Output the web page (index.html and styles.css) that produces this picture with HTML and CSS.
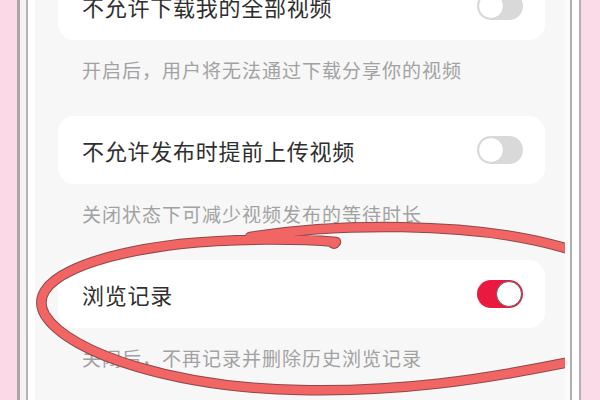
FILE: index.html
```html
<!DOCTYPE html>
<html lang="zh">
<head>
<meta charset="utf-8">
<link rel="stylesheet" href="styles.css">
</head>
<body>
<div class="page">
  <div class="pink-l"></div>
  <div class="line-a"></div>
  <div class="gap-a"></div>
  <div class="line-b"></div>
  <div class="white-a"></div>
  <div class="screen">
    <div class="list">
      <div class="card">
        <span class="title">不允许下载我的全部视频</span>
        <span class="toggle"><span class="knob"></span></span>
      </div>
      <div class="desc">开启后，用户将无法通过下载分享你的视频</div>
      <div class="card">
        <span class="title">不允许发布时提前上传视频</span>
        <span class="toggle"><span class="knob"></span></span>
      </div>
      <div class="desc">关闭状态下可减少视频发布的等待时长</div>
      <div class="card">
        <span class="title">浏览记录</span>
        <span class="toggle on"><span class="knob"></span></span>
      </div>
      <div class="desc">关闭后，不再记录并删除历史浏览记录</div>
    </div>
  </div>
  <div class="white-b"></div>
  <div class="line-c"></div>
  <div class="gap-b"></div>
  <div class="line-d"></div>
  <div class="pink-r"></div>
  <svg class="mark" width="600" height="400" viewBox="0 0 600 400">
    <defs>
      <clipPath id="scr"><rect x="35" y="0" width="530" height="400"/></clipPath>
    </defs>
    <g clip-path="url(#scr)" fill="none" stroke-linecap="round" stroke-linejoin="round">
      <path class="ring-edge" d="M 250 237 C 330 224, 470 220, 565 248 C 640 270, 650 350, 565 363 C 480 380, 400 392, 300 390 C 180 388, 70 355, 45 315 C 25 280, 90 255, 180 244 C 240 238, 300 239, 336 242"/>
      <circle class="blob-edge" cx="334" cy="243" r="6"/>
      <path class="ring" d="M 250 237 C 330 224, 470 220, 565 248 C 640 270, 650 350, 565 363 C 480 380, 400 392, 300 390 C 180 388, 70 355, 45 315 C 25 280, 90 255, 180 244 C 240 238, 300 239, 336 242"/>
      <circle class="blob" cx="334" cy="243" r="5"/>
    </g>
  </svg>
</div>
</body>
</html>
```

FILE: styles.css
```css
html, body {
  margin: 0;
  padding: 0;
}
body {
  width: 600px;
  height: 400px;
  overflow: hidden;
  font-family: "Noto Sans CJK SC", "Noto Sans", sans-serif;
}
.page {
  position: relative;
  display: flex;
  width: 600px;
  height: 400px;
  background: #fcdbe7;
}
.pink-l { width: 17px; background: #fcd9e6; }
.line-a { width: 3px; background: #aaa6ac; }
.gap-a { width: 6px; background: #f3f3f3; }
.line-b { width: 2px; background: #b4b4b4; }
.white-a { width: 7px; background: #ffffff; }
.screen {
  width: 530px;
  background: #f7f7f7;
  overflow: hidden;
}
.white-b { width: 5px; background: #fbfbfb; }
.line-c { width: 2px; background: #b0b0b0; }
.gap-b { width: 7px; background: #ffffff; }
.line-d { width: 2px; background: #b3afb5; }
.pink-r { flex: 1; background: #fcdbe8; }

.list {
  margin-top: -28px;
  padding: 0 20px 0 23px;
}
.card {
  height: 68px;
  background: #ffffff;
  border-radius: 16px;
  display: flex;
  align-items: center;
  justify-content: space-between;
  padding: 0 22px 0 24px;
}
.title {
  font-size: 22px;
  letter-spacing: 0.75px;
  color: #2f2f2f;
  line-height: 28px;
}
.desc {
  padding: 18px 0 34px 24px;
  font-size: 19px;
  line-height: 24px;
  letter-spacing: 1px;
  color: #a2a2a2;
}
.toggle {
  width: 46px;
  height: 28px;
  box-sizing: border-box;
  border-radius: 14px;
  background: #d9d9d9;
  display: flex;
  align-items: center;
  padding: 1px;
}
.knob {
  width: 26px;
  height: 26px;
  box-sizing: border-box;
  border-radius: 50%;
  background: #ffffff;
  border: 1px solid #d4d4d4;
}
.toggle.on {
  background: #ea1a3e;
  justify-content: flex-end;
}
.toggle.on .knob {
  border: 1.5px solid #6a5a5e;
}
.mark {
  position: absolute;
  left: 0;
  top: 0;
}
.ring-edge {
  stroke: #8e4848;
  stroke-width: 10.5;
}
.ring {
  stroke: #f26565;
  stroke-width: 8.5;
}
.blob-edge {
  fill: #8e4848;
  stroke: none;
}
.blob {
  fill: #f26565;
  stroke: none;
}
```
